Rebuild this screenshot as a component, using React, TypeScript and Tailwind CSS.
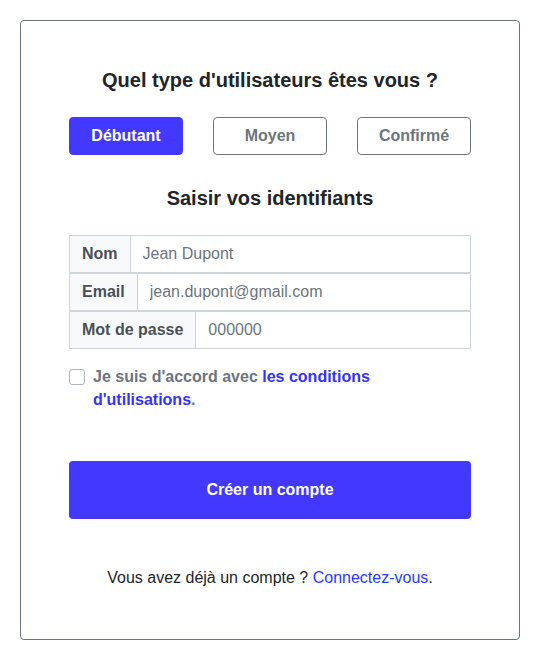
import { useState } from 'react'

const levels = ['Débutant', 'Moyen', 'Confirmé']

const fields = [
  { label: 'Nom', value: 'Jean Dupont' },
  { label: 'Email', value: 'jean.dupont@gmail.com' },
  { label: 'Mot de passe', value: '000000' },
]

const App = () => {
  const [level, setLevel] = useState('Débutant')
  const [agree, setAgree] = useState(false)

  return (
    <div className="min-h-screen bg-white p-5 font-['Liberation_Sans',Arial,sans-serif] text-[#212529]">
      <div className="w-[500px] h-[620px] border border-[#6c757d] rounded-[4px] px-[48px] pt-[45px]">
        {/* Type d'utilisateur */}
        <h2 className="text-center text-[20px] leading-[28px] font-bold">
          Quel type d'utilisateurs êtes vous ?
        </h2>
        <div className="mt-[23px] flex justify-between">
          {levels.map((l) => (
            <button
              key={l}
              onClick={() => setLevel(l)}
              className={
                l === level
                  ? 'w-[114px] h-[38px] rounded-[4px] border border-[#4338ff] bg-[#4338ff] text-white font-bold text-[16px]'
                  : 'w-[114px] h-[38px] rounded-[4px] border border-[#6c757d] bg-white text-[#6c757d] font-bold text-[16px]'
              }
            >
              {l}
            </button>
          ))}
        </div>

        {/* Identifiants */}
        <h2 className="mt-[29px] text-center text-[20px] leading-[28px] font-bold">
          Saisir vos identifiants
        </h2>
        <div className="mt-[23px] flex flex-col">
          {fields.map((f) => (
            <div key={f.label} className="flex h-[38px] border border-[#ced4da]">
              <span className="flex items-center px-3 bg-[#f8f9fa] border-r border-[#ced4da] font-bold text-[16px] text-[#495057]">
                {f.label}
              </span>
              <input
                defaultValue={f.value}
                className="flex-1 min-w-0 px-3 text-[16px] text-[#6c757d] outline-none"
              />
            </div>
          ))}
        </div>

        <label className="mt-[16px] flex items-start gap-2 text-[16px] leading-[23px] font-bold text-[#6c757d]">
          <input
            type="checkbox"
            checked={agree}
            onChange={() => setAgree(!agree)}
            className="mt-[4px] w-4 h-4 shrink-0 appearance-none rounded-[3px] border border-[#adb5bd] bg-white"
          />
          <span>
            Je suis d'accord avec{' '}
            <a className="text-[#3333ff]">les conditions d'utilisations</a>.
          </span>
        </label>

        <button className="mt-[50px] w-full h-[58px] rounded-[4px] bg-[#4338ff] text-white font-bold text-[16px]">
          Créer un compte
        </button>

        <p className="mt-[47px] text-center text-[16px] leading-[24px]">
          Vous avez déjà un compte ? <a className="text-[#1f3bff]">Connectez-vous</a>.
        </p>
      </div>
    </div>
  )
}

export default App
